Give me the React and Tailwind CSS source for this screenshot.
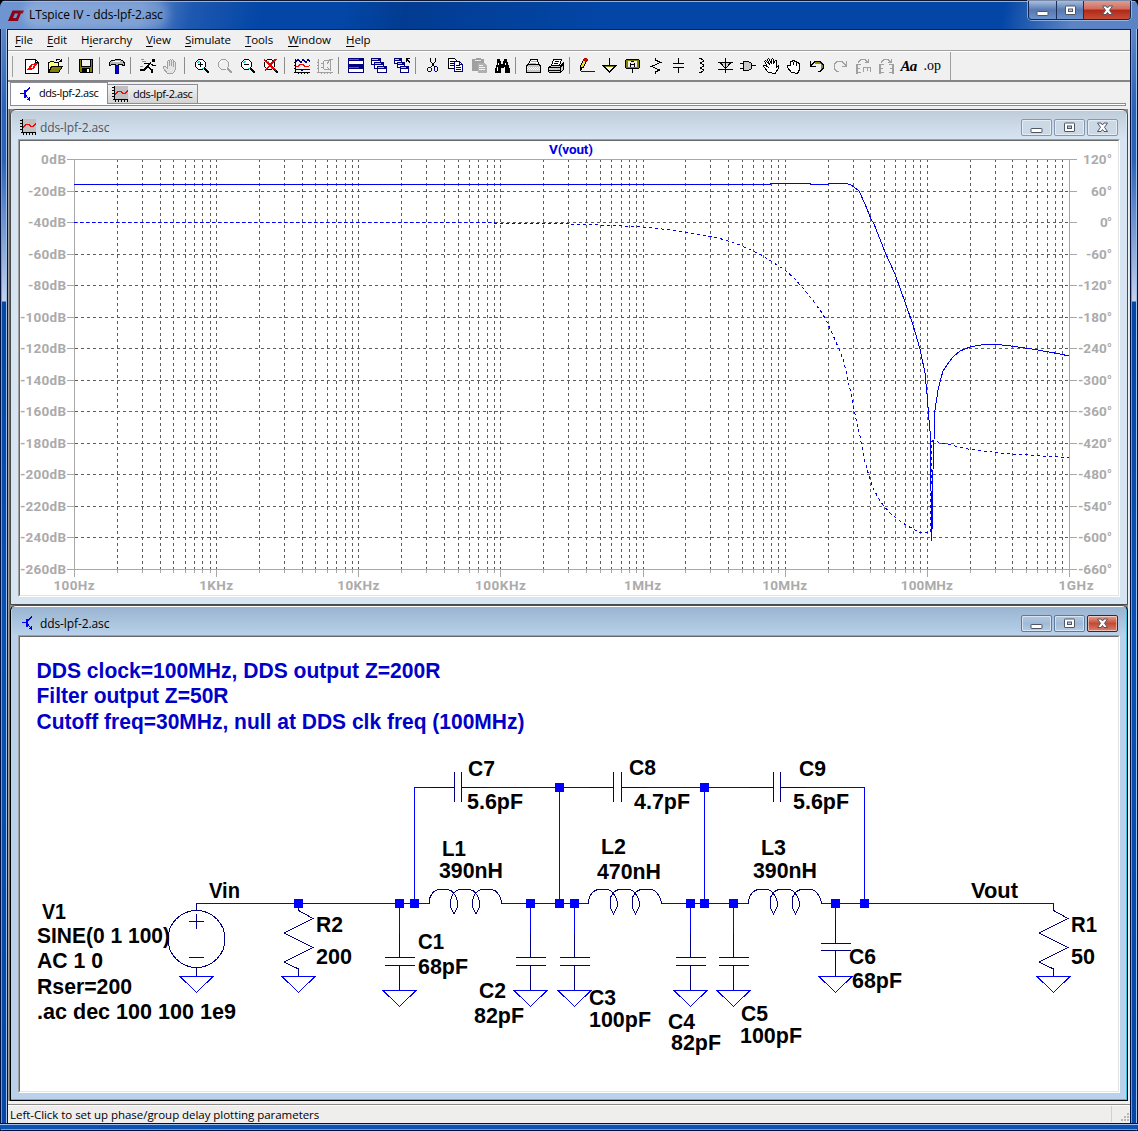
import React from "react";

const UI = "font-['Open_Sans','Noto_Sans',sans-serif]";

/* ---------- toolbar glyphs, each on a 16x16 pixel grid ---------- */

function Glyph({ children }) {
  return (
    <svg width="16" height="16" viewBox="0 0 16 16" shapeRendering="crispEdges" fill="none" stroke="#000" className="block shrink-0">
      {children}
    </svg>
  );
}

function Magnifier({ sign, dim, cross }) {
  const c = dim ? "#a0a0a0" : "#000";
  return (
    <Glyph>
      <path d="M4.500 1.500h4l3 3v4l-3 3h-4l-3-3v-4z" fill={dim ? "none" : "#fff"} stroke={c} />
      <path d="M3 4.500h2M4 3.500h2M8 10.500h2" stroke={dim ? "#fff" : "#00d8d8"} />
      {sign && <path d={sign === "+" ? "M4 6.500h5M6.500 4v5" : "M4 6.500h5"} stroke={c} />}
      <path d="M10.500 10.500l4.500 4.500" stroke={c} strokeWidth="2.400" />
      {cross && <path d="M1 1.500l12 11M13 1L2 12.500" stroke="#e00000" strokeWidth="1.800" />}
    </Glyph>
  );
}

function MiniWindow({ x, y, w = 8, h = 6 }) {
  return (
    <g stroke="none">
      <rect x={x} y={y} width={w} height={h} fill="#000080" />
      <rect x={x + 1} y={y + 3} width={w - 2} height={h - 4} fill="#fff" />
      <rect x={x + 1} y={y + 1} width={w - 4} height={1} fill="#b8c8f0" />
    </g>
  );
}

const PlotGlyph = () => (
  <Glyph>
    <path d="M2 0h14v13H2z" fill="#c0c0c0" stroke="none" />
    <path d="M2.500 0v14M1 13.500h15M0 1.500h2M0 4.500h2M0 7.500h2M0 10.500h2M3.500 14v2M6.500 14v2M9.500 14v2M12.500 14v2M15.500 14v2" />
    <path d="M3 8.500l3-3h3l2 2h2l3-3" stroke="#f00" strokeWidth="1.700" />
  </Glyph>
);

const TransistorGlyph = () => (
  <Glyph>
    <path d="M2 7.500h4M8 5.500l4-4M8 9.500l4 5M9 13.500h3M11.500 11v4" stroke="#0000e8" />
    <path d="M6 4h2v8H6z" fill="#0000e8" stroke="none" />
  </Glyph>
);

const EditRotate = ({ right }) => (
  <Glyph>
    <g stroke="#a0a0a0">
      <path d="M2 6v9.500" strokeWidth="2" />
      <path d="M1 6.500h5M1 10.500h4M1 14.500h5" />
      {right ? <path d="M15 6v9.500" strokeWidth="2" /> : <path d="M8.500 14V9.500h7V14M12 9v4" />}
      {right && <path d="M11 6.500h5M12 10.500h4M11 14.500h5" />}
      <path d="M3 4.500l3-3h4l3 3M13.500 1v4M10 4.500h4" />
    </g>
  </Glyph>
);

const tools = [
  <Glyph>
    <path d="M1.500 1.500h10l3 3v11h-13z" fill="#fff" />
    <path d="M11.500 1.500v3h3" />
    <path d="M3 12l4-6h2l-2 4h2l-1 2zM9 7l1-2h4l-1 2h-1l-2 4H8l2-4z" fill="#f00" stroke="none" />
  </Glyph>,
  <Glyph>
    <path d="M1.500 14V4.500h1l1-1h3l1 1h4v3" fill="#ffff80" />
    <path d="M1.500 14.500l3-6h11l-4 6z" fill="#808000" />
    <path d="M9 2.500c1-2 4-2 5 1M14.500 1v3M12 3.500h3" />
  </Glyph>,
  "|",
  <Glyph>
    <path d="M1.500 1.500h13v13h-12l-1-1z" fill="#808000" />
    <path d="M4 2h8v6H4z" fill="#f0f0f0" stroke="none" />
    <path d="M3.500 1.500v7h9v-7" />
    <path d="M4 10h8v5H4z" fill="#000" stroke="none" />
    <path d="M9 11h2v3H9z" fill="#fff" stroke="none" />
  </Glyph>,
  "|",
  <Glyph>
    <path d="M.5 4.500l2-2h3l1-1h5l3 2 1 2v2h-1l-2-1h-3v1h-3v-1h-4l-1 1h-1z" fill="#b8b8b8" />
    <path d="M4 3.500h7" stroke="#fff" />
    <path d="M6.500 7.500h3v8h-3z" fill="#0000e0" stroke="#000080" />
  </Glyph>,
  "|",
  <Glyph>
    <path d="M12 1h3v3h-3z" fill="#000" stroke="none" />
    <path d="M11 4.500L7 9M4 5.500h4l2 1M12 6l1 1.500h3M8 9l4 3v3M7 9l-3 3H0" strokeWidth="1.500" />
    <path d="M1 1.500h3M2 3.500h4M0 8.500h3" stroke="#909090" />
  </Glyph>,
  <Glyph>
    <path d="M4.500 15.500l-4-5v-2h2l2 2v-7l1-1 1 1v4-5l1-1 1 1v5-5l1-1 1 1v6-4l1-1 1 1v7l-2 3.500z" fill="#e4e4e4" stroke="#a0a0a0" />
  </Glyph>,
  "|",
  <Magnifier sign="+" />,
  <Magnifier dim />,
  <Magnifier sign="-" />,
  <Magnifier cross />,
  "|",
  <Glyph>
    <path d="M1.500 1v14M0 14.500h16M4.500 14v2M7.500 14v2M10.500 14v2M13.500 14v2M0 4.500h2M0 7.500h2M0 10.500h2" />
    <path d="M2 3.500l2-2 3 3 2-3 3 3 2-3 2 2" stroke="#000080" />
    <path d="M2 8.500h2l2-2h3l2 2h3l2-1" stroke="#f00" />
    <path d="M2 11.500h5l1 1 1-1h7" stroke="#000080" />
  </Glyph>,
  <Glyph>
    <path d="M1.500 1v14M0 14.500h16M4.500 14v2M7.500 14v2M10.500 14v2M13.500 14v2M0 4.500h2M0 7.500h2M0 10.500h2M4 5.500h2M4 9.500h2M6.500 3v8M7 2.500h6M7 11.500h6M13.500 2v11M12 1.500h4M10 5.500l2-2M10 9l2 2" stroke="#a0a0a0" />
  </Glyph>,
  "|",
  <Glyph>
    <g stroke="none">
      <path d="M0 0h16v15H0z" fill="#000080" />
      <path d="M1 3h14v3H1zM1 11h14v3H1z" fill="#fff" />
      <path d="M1 1h10v1H1zM1 9h10v1H1z" fill="#5060b0" />
    </g>
  </Glyph>,
  <Glyph>
    <MiniWindow x={0} y={0} w={10} h={7} />
    <MiniWindow x={3} y={4} w={10} h={7} />
    <MiniWindow x={6} y={8} w={10} h={7} />
  </Glyph>,
  <Glyph>
    <MiniWindow x={0} y={0} />
    <MiniWindow x={3} y={4} />
    <MiniWindow x={6} y={8} w={9} h={7} />
    <path d="M12.500 0v4M12 .5h4M13 1.500l3 3" />
  </Glyph>,
  "|",
  <Glyph>
    <path d="M5.500 0v3l4 6M10.500 0v3l-4 6" />
    <path d="M3.500 9.500h2l1 1v2l-1 1h-2l-1-1v-2zM10.500 8.500h1l1 1v3l-1 1h-1l-1-1v-3z" stroke="#000090" />
  </Glyph>,
  <Glyph>
    <path d="M.5.500h6l2 2v8h-8z" fill="#fff" />
    <path d="M2 3.500h4M2 5.500h5M2 7.500h4" />
    <path d="M6.500 3.500h5l3 3v7h-8z" fill="#fff" stroke="#000080" />
    <path d="M8 7.500h4M8 9.500h5M8 11.500h5M11.500 3.500v3h3" stroke="#000080" />
  </Glyph>,
  <Glyph>
    <g stroke="none">
      <path d="M1 1h3l1-1h4l1 1h3v12H1z" fill="#a0a0a0" />
      <path d="M4 2h6v1H4z" fill="#e8e8e8" />
      <path d="M7 5h6l3 3v7H7z" fill="#b0b0b0" />
      <path d="M8 7h4v1H8zM8 9h6v1H8zM8 11h6v1H8z" fill="#f4f4f4" />
    </g>
  </Glyph>,
  <Glyph>
    <g stroke="none">
      <path d="M3 1h3v2h1v3h2V3h1V1h3v3h1v3h1v3h1v5h-5v-5H7v5H1v-5h1V7h1z" fill="#000" />
      <path d="M4 5h1v2H4zM3 9h1v4H3zM11 5h1v2h-1zM10 9h1v4h-1z" fill="#fff" />
    </g>
  </Glyph>,
  "|",
  <Glyph>
    <path d="M3.500 6.500l2-5h7l1 5" fill="#fff" />
    <path d="M1.500 7.500l2-1h10l2 1v7h-14z" fill="#c8c8c8" />
    <path d="M2 9.500h13M3 10.500h12M2 11.500h13" stroke="#fff" strokeDasharray="1 1" />
    <path d="M6 3.500h6M5 5.500h6" stroke="#b0b0b0" />
  </Glyph>,
  <Glyph>
    <path d="M3.500 7.500l2-6h8l-2 6" fill="#fff" />
    <path d="M7 3.500h4M6 5.500h4" />
    <path d="M.5 9.500l3-2h9l3-3v7l-3 3h-11l-1-1z" fill="#d0d0d0" />
    <path d="M1 9.500h11l3-3M1 12.500h11M12.500 10v4" />
    <path d="M9 11h2v1H9z" fill="#e8d000" stroke="none" />
  </Glyph>,
  "|",
  <Glyph>
    <path d="M1.500 10.500v-2l3-7 3 1-3 7z" fill="#ffe000" />
    <path d="M4.500 1.500l1-1h2l1 1-1 2-3-1z" fill="#f00" stroke="#b00000" />
    <path d="M1 9h2v2l-2 2z" fill="#000" stroke="none" />
    <path d="M2 13.500h14" stroke="#0000ff" />
  </Glyph>,
  <Glyph>
    <path d="M7.500 0v7M0 7.500h15" />
    <path d="M2.500 8.500h10l-5 5z" fill="#f8f8f0" stroke="#808000" />
    <path d="M1 7.500l6.500 6.500L14 7.500" />
  </Glyph>,
  <Glyph>
    <path d="M1.500 1.500h12l1 1v7l-1 1h-12l-1-1v-7z" fill="#808000" />
    <path d="M3 3h9v6H3z" fill="#eee" stroke="none" />
    <path d="M5.500 9V4.500M9.500 9V4.500M6 3.500h3M6 6.500h4M7.500 11v4" />
  </Glyph>,
  <Glyph><path d="M7.500 0v2l5 2.500-9 4 8 3.500-4 2v2" /></Glyph>,
  <Glyph><path d="M7.500 0v5M2 5.500h11M2 9.500h11M7.500 10v5" /></Glyph>,
  <Glyph><path d="M5 .5h2l2 1.500v1.500l-3 1.500 3 1.500v2L6 10l3 1.500v1.500l-2 1.500H5" /></Glyph>,
  <Glyph>
    <path d="M3 4.500h11l-5.500 6z" fill="#d0d0d0" />
    <path d="M8.500 0v15M1 4.500h15M1 11.500h15" />
  </Glyph>,
  <Glyph>
    <path d="M3.500 3.500h5l3 2v5l-3 2h-5z" fill="#c8c8c8" />
    <path d="M0 5.500h4M0 10.500h4M12 7.500h4" />
  </Glyph>,
  <Glyph>
    <path d="M5.500 14.500l-5-6v-1h2l2 1-3-5 1-1 4 4-2-5 1-1 3 5v-4l1-1 1 1v4l2-3 1 0v7l2-2v3l-3 4v1z" fill="#fff" />
  </Glyph>,
  <Glyph>
    <path d="M5.500 14.500l-4-5v-2h3v-4h2v-1h2v1h2v1h2l1 2v5l-2 4z" fill="#fff" />
    <path d="M4.500 4v4M7.500 4v3M10.500 5v3" />
  </Glyph>,
  <Glyph>
    <path d="M6 4.500h5l2 2v4" stroke="#909000" strokeWidth="2" />
    <path d="M1.500 3v5h5M2 7.500l4-4h5l3 3v4l-3 3H9" />
  </Glyph>,
  <Glyph>
    <path d="M14.500 3v5h-5M14 7.500l-4-4H5l-3 3v4l3 3h2" stroke="#a0a0a0" />
  </Glyph>,
  <EditRotate />,
  <EditRotate right />,
  <span className="block w-4 text-center font-['Liberation_Serif',serif] text-[15px] leading-4 font-bold italic tracking-[-0.8px]">Aa</span>,
  <span className="block w-4 text-center font-['Liberation_Serif',serif] text-[14px] leading-[14px] tracking-[0px]">.op</span>,
];

/* ---------- window furniture ---------- */

function CaptionGlyph({ kind }) {
  return (
    <svg width="13" height="11" viewBox="0 0 13 11" className="block">
      {kind === "min" && <rect x="1" y="6.500" width="11" height="4" rx="0.500" fill="#fff" stroke="#4f5563" />}
      {kind === "max" && (
        <g fill="#fff" stroke="#4f5563">
          <rect x="1.500" y="1" width="10" height="8.500" rx="0.500" />
          <rect x="4.500" y="4" width="4" height="2.500" fill="#b8cbe0" />
        </g>
      )}
      {kind === "close" && (
        <path d="M1.500 1h3.500l1.500 2 1.500-2h3.500L8.500 5.300 11.500 9.500H8L6.500 7.500 5 9.500H1.500L4.500 5.300z" fill="#fff" stroke="#4f5563" />
      )}
    </svg>
  );
}

function ChildButton({ kind, className }) {
  return (
    <div className={`flex h-[17px] w-[31px] items-center justify-center rounded-[2px] border shadow-[inset_0_0_0_1px_rgba(255,255,255,0.5)] ${className}`}>
      <CaptionGlyph kind={kind} />
    </div>
  );
}

function ChildWindow({ active, icon, children }) {
  const plain = active
    ? "border-[#5f7a9c] bg-gradient-to-b from-[#b4cae2] via-[#a0bad6] to-[#b4cde6]"
    : "border-[#8496b0] bg-[#cbd9e7]";
  return (
    <div className="h-[496px] bg-[#8a8a8a]">
      <section
        className={`flex h-[496px] flex-col overflow-hidden rounded-t-[6px] border ${
          active
            ? "border-black border-t-[#505050] bg-[#b9d1ea] shadow-[inset_-1px_-1px_0_#35c5e0,inset_0_1px_0_#fff]"
            : "border-[#4a4a4a] bg-[#d7e4f2] shadow-[inset_0_1px_0_#eef4fa]"
        }`}
      >
        <header
          className={`mx-px mt-px flex h-7 shrink-0 items-center pl-2 pr-[8px] ${
            active ? "bg-gradient-to-b from-[#99b4d1] to-[#b9d1ea]" : "bg-gradient-to-b from-[#bfcddb] to-[#d7e4f2]"
          }`}
        >
          <div className="mt-1">{icon}</div>
          <span className={`mt-[6px] ml-1 flex-1 text-[12px] tracking-[-0.1px] leading-4 ${active ? "text-black" : "text-[#4b5562]"}`}>dds-lpf-2.asc</span>
          <div className="mt-[5px] flex gap-[2px]">
            <ChildButton kind="min" className={plain} />
            <ChildButton kind="max" className={plain} />
            <ChildButton
              kind="close"
              className={active ? "border-[#5a1a18] bg-gradient-to-b from-[#e8a090] via-[#c04a34] to-[#d88070]" : plain}
            />
          </div>
        </header>
        <div className="mx-[7px] h-[458px] shrink-0 border border-t-[#a0a0a0] border-r-white border-b-white border-l-[#a0a0a0]">
          <div className="h-[456px] border border-t-[#696969] border-r-[#e3e3e3] border-b-[#e3e3e3] border-l-[#696969] bg-white">
            {children}
          </div>
        </div>
      </section>
    </div>
  );
}

/* ---------- Bode plot ---------- */

const LEFT = 74, RIGHT = 1069, TOP = 159, BOTTOM = 569;
const rowY = (i) => Math.round(TOP + ((BOTTOM - TOP) * i) / 13) + 0.5;
const DEC = (RIGHT - LEFT) / 7;
const rows = Array.from({ length: 14 }, (_, i) => i);
const verticals = [];
for (let d = 0; d < 7; d++) for (let m = 2; m <= 10; m++) verticals.push({ x: Math.round(LEFT + DEC * (d + Math.log10(m))) + 0.5, major: m === 10 });
const decades = ["100Hz", "1KHz", "10KHz", "100KHz", "1MHz", "10MHz", "100MHz", "1GHz"];
const decadeWidths = [41, 34, 42, 51, 37, 45, 52, 35];

const gain =
  "74,184.5 770,184.5 770,183.5 810,183.5 810,184.5 828,184.5 828,183.5 847,183.5 851,185 854,187 859,191 865,204 871,219 874,224 885,252 895,274 905,302 913,325 920,349 925,373 927,394 929,420 930.5,437 931.500,541 932.500,519 933,470 934,440 934.500,413 936.500,400 938,390 941,378 943,371 949,362 953,357 960,351 970,347 978,345.500 985,344.500 998,344.500 1011,346 1029,348.500 1049,352 1060,354 1069,356";
const phase =
  "74,222.5 494,222.5 495,223.5 568,223.5 572,224.500 600,224.500 602,225.500 625,226 650,227.500 670,230 685,232 710,236.500 720,238.500 740,245 753,251 764,256.500 774,263 785,270 794,278 801,286 808,294 814,302 822,313 826,320 832,333 839,349 844,362 847,376 849,385 852,398 856,419 860,436 864,458 869,476 873,488 880,501 884,506 890,513 900,521 906,525 915,530 919,532 926,532.500 930.500,533 931.500,442 933,440.500 940,442.500 955,446 970,449.500 988,451.500 1010,454 1030,455 1050,456.500 1069,457.500";

const leftWidth = (i) => (i === 0 ? 25 : i < 5 ? 38 : 46);
const rightWidth = (t) => ({ 2: 12, 3: 19, 4: 26, 5: 34 })[t.length];

function BodePlot() {
  return (
    <svg width="1098" height="454" viewBox="20 141 1098 454" className="block">
      <g shapeRendering="crispEdges" fill="none">
        <g stroke="#5c5c5c" strokeDasharray="3 3">
          {rows.slice(1, 13).map((i) => <path key={i} d={`M${LEFT + 1} ${rowY(i)}H${RIGHT}`} />)}
          {verticals.slice(0, -1).map((v, i) => <path key={i} d={`M${v.x} ${TOP}V${BOTTOM}`} />)}
        </g>
        <g stroke="#a8a8a8">
          <path d={`M67 159.5H1077M67 569.5H1077M74.5 159V577M1069.5 159V577`} />
          {rows.map((i) => <path key={i} d={`M67 ${rowY(i)}H74M1069 ${rowY(i)}H1077`} />)}
          {verticals.map((v, i) => <path key={i} d={`M${v.x} 569V${v.major ? 577 : 573}`} />)}
        </g>
        <polyline points={gain} stroke="#0000f0" />
        <polyline points={phase} stroke="#0000f0" strokeDasharray="3 3" />
      </g>
      <g className="font-['Roboto',sans-serif] text-[13.500px] font-bold" fill="#ababab">
        {rows.map((i) => {
          const t = `${i ? "-" : ""}${i * 20}dB`;
          return <text key={t} x={66 - leftWidth(i)} y={rowY(i) + 4.500} textLength={leftWidth(i)}>{t}</text>;
        })}
        {rows.map((i) => {
          const t = `${120 - i * 60}°`;
          const w = i === 0 ? 29 : i === 2 ? 12 : rightWidth(t);
          const len = t === "60°" ? 21 : t === "-60°" ? 26 : w;
          return <text key={t} x={1112 - len} y={rowY(i) + 4.500} textLength={len}>{t}</text>;
        })}
        {decades.map((t, i) => (
          <text key={t} x={LEFT + DEC * i + (i === 7 ? 1 : 0) - decadeWidths[i] / 2 + (i === 7 ? 6 : 0)} y={590} textLength={decadeWidths[i]}>{t}</text>
        ))}
        <text x="549" y="154" fill="#0000e8" textLength="44">V(vout)</text>
      </g>
    </svg>
  );
}

/* ---------- schematic ---------- */

const WIRE = "#0000ff";
const PART = "#000080";

const Ground = ({ x, y }) => <path d={`M${x - 16.500} ${y}h33l-16.500 16z`} stroke={WIRE} />;

function ShuntCap({ x, y = 957.5, gap = 8, gnd = 990.5 }) {
  return (
    <g>
      <path d={`M${x} 903.5V${y - 24}`} stroke={WIRE} />
      <path d={`M${x} ${y - 24}V${y}M${x - 15} ${y}h30M${x - 15} ${y + gap}h30M${x} ${y + gap}V${gnd}`} stroke={PART} />
      <Ground x={x} y={gnd} />
    </g>
  );
}

const SeriesCap = ({ a, b }) => (
  <path d={`M${a - 25} 787.5H${a}M${a} 772v30M${b} 772v30M${b} 787.5h25`} stroke={PART} />
);

const Coil = ({ x }) => (
  <path
    transform={`translate(${x} 0)`}
    d="M0 903.5V901C1 894 6 889.500 10 889.500H19C23 890 27 895 28.500 901V907L25 914L21.500 907V901C22 894 27 889.500 31 889.500H41C45 890 49 895 50.500 901V907L47 914L43.500 907V901C44 894 49 889.500 53 889.500H63C67 890 71 895 72.500 901V903.5"
    stroke={PART}
  />
);

const Resistor = ({ x }) => (
  <g>
    <path d={`M${x} 903.5V910.500l14.500 8-29 14.500 29 14.500-29 14.500 14.500 7V976.5`} stroke={PART} />
    <Ground x={x} y={976.5} />
  </g>
);

const nodes = [[298, 903], [399, 903], [414, 903], [530, 903], [559, 903], [574, 903], [690, 903], [704, 903], [733, 903], [835, 903], [864, 903], [559, 787], [704, 787]];

const notes = [
  [36.5, 678, "DDS clock=100MHz, DDS output Z=200R", 404],
  [36.5, 703, "Filter output Z=50R", 192],
  [36.5, 729, "Cutoff freq=30MHz, null at DDS clk freq (100MHz)", 488],
];

const labels = [
  [42, 919, "V1", 24], [37, 943, "SINE(0 1 100)", 133], [37, 968, "AC 1 0", 66], [37, 994, "Rser=200", 95],
  [37, 1019, ".ac dec 100 100 1e9", 199], [209, 898, "Vin", 31], [316, 932, "R2", 27], [316, 964, "200", 36],
  [468, 776, "C7", 27], [467, 809, "5.6pF", 56], [629, 775, "C8", 27], [634, 809, "4.7pF", 56], [799, 776, "C9", 27], [793, 809, "5.6pF", 56],
  [442, 856, "L1", 24], [439, 878, "390nH", 64], [601, 854, "L2", 25], [597, 879, "470nH", 64], [761, 855, "L3", 25], [753, 878, "390nH", 64],
  [418, 949, "C1", 26], [418, 974, "68pF", 50], [479, 998, "C2", 27], [474, 1023, "82pF", 50],
  [589, 1005, "C3", 27], [589, 1027, "100pF", 62], [668, 1029, "C4", 27], [671, 1050, "82pF", 50],
  [741, 1021, "C5", 27], [740, 1043, "100pF", 62], [849, 964, "C6", 27], [852, 988, "68pF", 50],
  [971, 898, "Vout", 47], [1071, 932, "R1", 26], [1071, 964, "50", 24],
];

function Schematic() {
  return (
    <svg width="1098" height="454" viewBox="20 637 1098 454" className="block">
      <g shapeRendering="crispEdges" fill="none">
        <path
          stroke={WIRE}
          d="M196.5 910V903.5H429M501.500 903.5H588.500M661 903.5H749M821.500 903.5H1053.5M414.5 903.5V787.5H430M486 787.5H589M646 787.5H750M805 787.5H864.5V903.5M559.5 787.5V903.5M704.5 787.5V903.5"
        />
        <circle cx="196.5" cy="939" r="28.500" stroke={PART} />
        <path d="M189 921.500h15M196.5 914v15M189 957.500h15M196.5 903.500v7M196.5 967.500v9" stroke={PART} />
        <Ground x={196.5} y={976.5} />
        <Resistor x={298.5} />
        <Resistor x={1053.5} />
        <Coil x={429} />
        <Coil x={588.5} />
        <Coil x={748.5} />
        <SeriesCap a={454.5} b={461.5} />
        <SeriesCap a={613.5} b={621.5} />
        <SeriesCap a={773.5} b={780.5} />
        {[399.5, 530.5, 574.5, 690.5, 733.5].map((x) => <ShuntCap key={x} x={x} />)}
        <ShuntCap x={835.5} y={943.5} gap={7} gnd={976.5} />
        {nodes.map(([x, y]) => <rect key={`${x}-${y}`} x={x - 4} y={y - 4} width="9" height="9" fill={WIRE} />)}
      </g>
      <g className="font-['Liberation_Sans',sans-serif] text-[21.500px] font-bold">
        {notes.map(([x, y, t, w]) => <text key={t} x={x} y={y} fill="#0000c8" textLength={w} lengthAdjust="spacingAndGlyphs">{t}</text>)}
        {labels.map(([x, y, t, w]) => <text key={`${x}-${y}`} x={x} y={y} textLength={w} lengthAdjust="spacingAndGlyphs">{t}</text>)}
      </g>
    </svg>
  );
}

/* ---------- application shell ---------- */

const menus = [
  ["", "F", "ile", "w-8"], ["", "E", "dit", "w-[34px]"], ["H", "i", "erarchy", "w-[65px]"], ["", "V", "iew", "w-[39px]"],
  ["", "S", "imulate", "w-[60px]"], ["", "T", "ools", "w-[43px]"], ["", "W", "indow", "w-[58px]"], ["", "H", "elp", "w-10"],
];

const sideClass =
  "h-[1102px] w-[8px] shrink-0 border-x border-[#00103c] bg-[linear-gradient(to_bottom,#5d86c6_0,#2a62b6_80px,#2a62b6_130px,#c6d0ec_272px,#0646a4_273px,#0a50b4_600px,#0646a4_100%)] shadow-[inset_1px_0_0_#6f9bd8,inset_-1px_0_0_#9fc0e8]";

export default function App() {
  return (
    <div className={`h-[1131px] w-[1138px] overflow-hidden bg-black text-[11.5px] text-black ${UI}`}>
      <div className="flex h-[1131px] flex-col overflow-hidden rounded-t-[7px] rounded-b-[4px] bg-[#0646a4]">
        <div className="flex h-[29px] shrink-0 items-start border-t border-[#101830] bg-[linear-gradient(100deg,#6f96d2_0,#5f8acb_140px,#1e58b0_190px,#0346a6_260px,#0346a6_340px,#023c92_400px,#0346a6_600px,#0346a6_990px,#5c84c4_1060px,#5a83c6_100%)] shadow-[inset_0_1px_0_#8fb2e0]">
          <svg width="16" height="12" viewBox="0 0 16 12" className="mt-[9px] ml-[8px]">
            <path d="M0 11L4.500 0.500h3.500L5 8h3L7 11zM7.500 0.500H16L14.800 3.500H13L9.800 11H7L10 3.500H6.500z" fill="#8c0010" />
          </svg>
          <span className="mt-[6px] ml-[5px] flex-1 text-[12px] leading-4 tracking-[-0.08px]">
            <span className="rounded-full bg-white/20 shadow-[0_0_9px_6px_rgba(255,255,255,0.22)]">LTspice IV - dds-lpf-2.asc</span>
          </span>
          <div className="mr-[7px] flex h-[19px] rounded-b-[4px] border border-t-0 border-[#14264c] shadow-[0_0_0_1px_rgba(190,215,245,0.6)]">
            <div className="flex w-[28px] items-center justify-center rounded-bl-[3px] border-r border-[#1c2f58] bg-gradient-to-b from-[#a8bfe0] via-[#5878b0] to-[#6b92cc]"><CaptionGlyph kind="min" /></div>
            <div className="flex w-[27px] items-center justify-center border-r border-[#1c2f58] bg-gradient-to-b from-[#a8bfe0] via-[#5878b0] to-[#6b92cc]"><CaptionGlyph kind="max" /></div>
            <div className="flex w-[46px] items-center justify-center rounded-br-[3px] bg-[linear-gradient(#e09c90_0%,#cf6b5c_45%,#b02818_50%,#c84c34_100%)]"><CaptionGlyph kind="close" /></div>
          </div>
        </div>

        <div className="flex h-[1094px] shrink-0">
          <div className={sideClass} />
          <main className="flex w-[1122px] flex-col border-t border-[#0b2550] bg-[#f0f0f0]">
            <nav className="flex h-[20px] shrink-0 items-center pl-[7px]">
              {menus.map(([pre, key, post, width]) => (
                <span key={key + post} className={`block whitespace-nowrap leading-4 tracking-[-0.1px] ${width}`}>{pre}<u className="underline-offset-2">{key}</u>{post}</span>
              ))}
            </nav>

            <div className="flex h-[32px] shrink-0 border-t border-b-2 border-t-[#a0a0a0] border-b-[#858585] shadow-[inset_0_1px_0_#fff]">
              <div className="mt-[5px] ml-[4px] h-[21px] w-px bg-[#a0a0a0]" />
              <div className="flex w-[930px] items-center pl-[7px]">
                {tools.map((t, i) =>
                  t === "|" ? (
                    <div key={i} className="mr-[5px] ml-[2px] h-[17px] w-px bg-[#8c8c8c]" />
                  ) : (
                    <div key={i} className="flex w-[23px] justify-center">{t}</div>
                  )
                )}
              </div>
              <div className="ml-auto mr-[179px] mt-px h-[28px] w-px bg-[#a0a0a0]" />
            </div>

            <div className="h-[27px] shrink-0 pl-[2px] pr-[4px]">
              <div className="flex h-[22px] items-end border-b border-[#8c8c98]">
                <div className="-mb-px flex h-[22px] w-[98px] items-center border-x border-t border-[#8c8c98] bg-white pl-[7px]">
                  <TransistorGlyph /><span className="ml-[5px] text-[11px] tracking-[-0.420px]">dds-lpf-2.asc</span>
                </div>
                <div className="flex h-[19px] w-[90px] items-center border-t border-r border-[#8c8c98] bg-gradient-to-b from-[#f2f2f2] to-[#d4d4d4] pl-[4px]">
                  <PlotGlyph /><span className="mt-px ml-[5px] text-[11px] tracking-[-0.420px]">dds-lpf-2.asc</span>
                </div>
              </div>
              <div className="h-[2px] border-x border-b border-[#8c8c98] bg-white" />
            </div>

            <div className="h-[992px] shrink-0 border-r border-l border-r-[#e3e3e3] border-l-[#a0a0a0]">
              <div className="border-r border-l border-r-[#f0f0f0] border-l-[#696969]">
                <ChildWindow icon={<PlotGlyph />}><BodePlot /></ChildWindow>
                <ChildWindow active icon={<TransistorGlyph />}><Schematic /></ChildWindow>
              </div>
            </div>

            <footer className="mt-[3px] flex h-[19px] shrink-0 items-center border-t border-[#8a8a8a] bg-[#f0eded] pl-[2px] shadow-[inset_0_1px_0_#fff]">
              <span className="mt-px flex-1 whitespace-nowrap text-[11.5px] leading-4 tracking-[-0.04px]">Left-Click to set up phase/group delay plotting parameters</span>
              <div className="h-4 w-px bg-[#d0d0d0]" />
              <svg width="18" height="16" viewBox="0 0 18 16" fill="#b8b8b8" shapeRendering="crispEdges">
                <path d="M15 7h2v2h-2zM12 10h2v2h-2zM15 10h2v2h-2zM9 13h2v2H9zM12 13h2v2h-2zM15 13h2v2h-2z" />
              </svg>
            </footer>
          </main>
          <div className={sideClass} />
        </div>
        <div className="h-[8px] shrink-0 border-y border-[#00103c] bg-[#0d52b2] shadow-[inset_0_1px_0_#9fc0e8,inset_0_-1px_0_#6f9bd8]" />
      </div>
    </div>
  );
}
